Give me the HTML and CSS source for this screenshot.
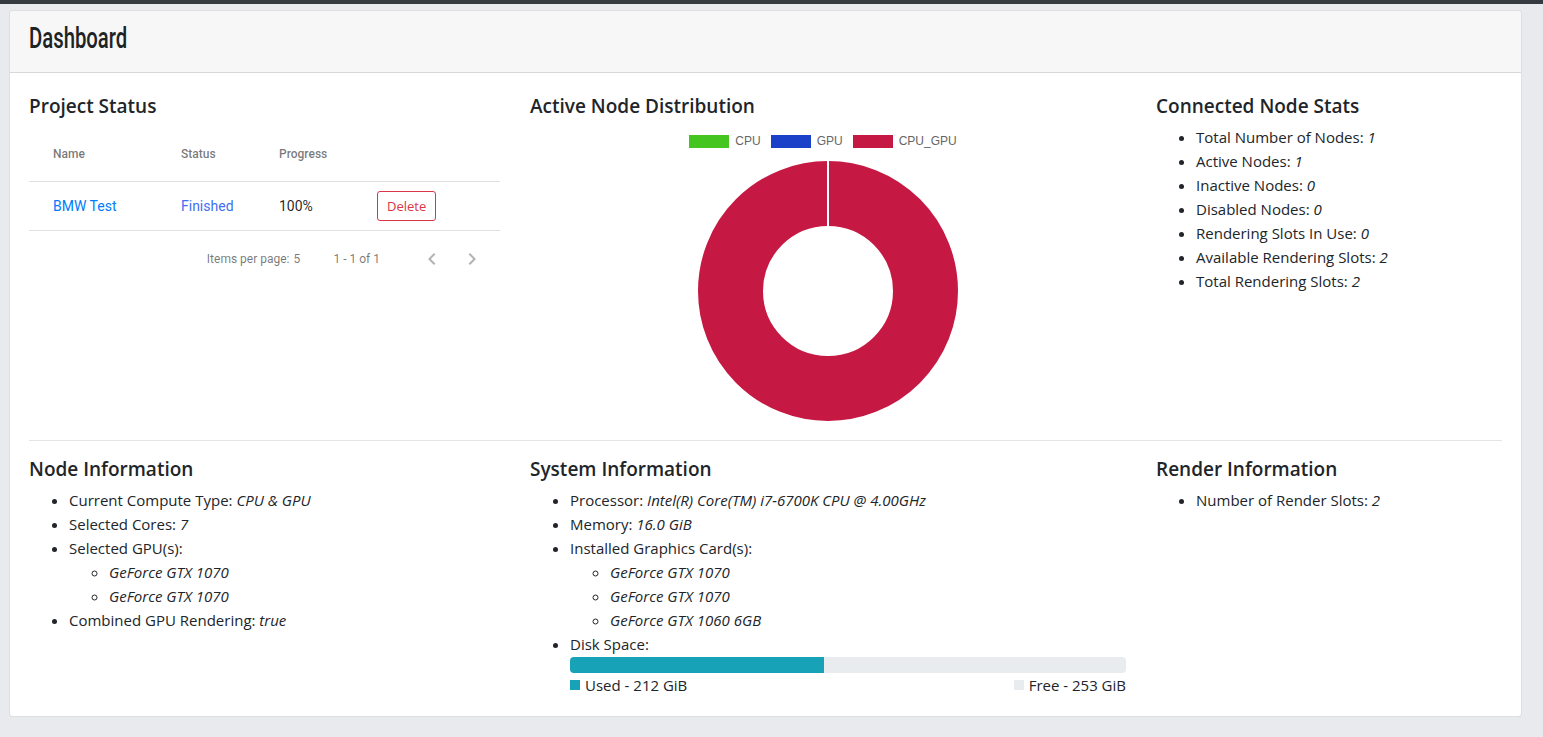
FILE: index.html
```html
<!DOCTYPE html>
<html lang="en">
<head>
<meta charset="utf-8">
<title>Dashboard</title>
<link rel="stylesheet" href="styles.css">
</head>
<body>
<div class="topbar"></div>
<main class="page">
  <section class="card">
    <header class="card-header"><h1 class="title">Dashboard</h1></header>
    <div class="card-body">
      <div class="grid">
        <div class="col">
          <h4 class="heading">Project Status</h4>
          <div class="mtable">
            <div class="mrow mhead">
              <div class="mcell">Name</div>
              <div class="mcell">Status</div>
              <div class="mcell">Progress</div>
              <div class="mcell"></div>
            </div>
            <div class="mrow mdata">
              <div class="mcell"><a class="link">BMW Test</a></div>
              <div class="mcell"><span class="finished">Finished</span></div>
              <div class="mcell">100%</div>
              <div class="mcell"><button class="btn-del">Delete</button></div>
            </div>
            <div class="paginator">
              <span class="pg-label">Items per page:</span>
              <span class="pg-select">5</span>
              <span class="pg-range">1 - 1 of 1</span>
              <span class="pg-btn"><svg viewBox="0 0 24 24" width="24" height="24"><path d="M15.41 7.41L14 6l-6 6 6 6 1.41-1.41L10.83 12z"/></svg></span>
              <span class="pg-btn"><svg viewBox="0 0 24 24" width="24" height="24"><path d="M10 6L8.59 7.41 13.17 12l-4.58 4.59L10 18l6-6z"/></svg></span>
            </div>
          </div>
        </div>
        <div class="col">
          <h4 class="heading">Active Node Distribution</h4>
          <div class="legend">
            <span class="lg-item"><span class="lg-box cpu"></span>CPU</span>
            <span class="lg-item"><span class="lg-box gpu"></span>GPU</span>
            <span class="lg-item"><span class="lg-box cpugpu"></span>CPU_GPU</span>
          </div>
          <div class="chart">
            <svg width="262" height="264" viewBox="0 0 262 264">
              <circle cx="131" cy="131" r="97.5" fill="none" stroke="#c51843" stroke-width="65"/>
              <line x1="131" y1="0" x2="131" y2="66" stroke="#ffffff" stroke-width="2"/>
            </svg>
          </div>
        </div>
        <div class="col">
          <h4 class="heading">Connected Node Stats</h4>
          <ul class="list">
            <li>Total Number of Nodes: <em>1</em></li>
            <li>Active Nodes: <em>1</em></li>
            <li>Inactive Nodes: <em>0</em></li>
            <li>Disabled Nodes: <em>0</em></li>
            <li>Rendering Slots In Use: <em>0</em></li>
            <li>Available Rendering Slots: <em>2</em></li>
            <li>Total Rendering Slots: <em>2</em></li>
          </ul>
        </div>
      </div>
      <hr class="divider">
      <div class="grid">
        <div class="col">
          <h4 class="heading">Node Information</h4>
          <ul class="list">
            <li>Current Compute Type: <em>CPU &amp; GPU</em></li>
            <li>Selected Cores: <em>7</em></li>
            <li>Selected GPU(s):
              <ul class="sublist">
                <li><em>GeForce GTX 1070</em></li>
                <li><em>GeForce GTX 1070</em></li>
              </ul>
            </li>
            <li>Combined GPU Rendering: <em>true</em></li>
          </ul>
        </div>
        <div class="col">
          <h4 class="heading">System Information</h4>
          <ul class="list">
            <li>Processor: <em>Intel(R) Core(TM) i7-6700K CPU @ 4.00GHz</em></li>
            <li>Memory: <em>16.0 GiB</em></li>
            <li>Installed Graphics Card(s):
              <ul class="sublist">
                <li><em>GeForce GTX 1070</em></li>
                <li><em>GeForce GTX 1070</em></li>
                <li><em>GeForce GTX 1060 6GB</em></li>
              </ul>
            </li>
            <li>Disk Space:
              <div class="progress"><div class="progress-bar" style="width: 45.6%"></div></div>
              <div class="disk-legend">
                <span class="dl-item"><span class="dl-box used"></span>Used - 212 GiB</span>
                <span class="dl-item"><span class="dl-box free"></span>Free - 253 GiB</span>
              </div>
            </li>
          </ul>
        </div>
        <div class="col">
          <h4 class="heading">Render Information</h4>
          <ul class="list">
            <li>Number of Render Slots: <em>2</em></li>
          </ul>
        </div>
      </div>
    </div>
  </section>
</main>
</body>
</html>
```
FILE: styles.css
```css
* { box-sizing: border-box; }
html, body { margin: 0; padding: 0; }
body {
  background: #e9eaee;
  font-family: "Open Sans", "Noto Sans", sans-serif;
  font-size: 15px;
  color: #212529;
  height: 737px;
  overflow: hidden;
}
.topbar { height: 4px; background: #343a40; }
.page { padding: 6px 21px 0 9px; }
.card {
  background: #fff;
  border: 1px solid rgba(0,0,0,.125);
  border-radius: 4px;
}
.card-header {
  background: #f7f7f7;
  border-bottom: 1px solid rgba(0,0,0,.125);
  height: 62px;
  padding: 0 19px 8px;
  display: flex;
  align-items: center;
  border-radius: 4px 4px 0 0;
}
.title {
  margin: 0;
  font-family: Roboto, "Liberation Sans", sans-serif;
  font-size: 29px;
  font-weight: 500;
  color: #1e2326;
  line-height: 32px;
  display: inline-block;
  transform: scaleX(0.7);
  transform-origin: left center;
}
.card-body { padding: 21px 19px 19px; }
.grid {
  display: grid;
  grid-template-columns: 471fr 596fr 346fr;
  column-gap: 30px;
}
.heading {
  margin: 0 0 7px;
  font-size: 19px;
  font-weight: 600;
  line-height: 24px;
  color: #212529;
}
.list { margin: 0; padding-left: 40px; line-height: 24px; }
.list em { font-style: italic; }
.sublist { margin: 0; padding-left: 40px; list-style-type: circle; }
.divider { border: 0; border-top: 1px solid rgba(0,0,0,.1); margin: 16px 0 16px; }

/* table */
.mtable { font-family: Roboto, sans-serif; font-size: 14px; color: rgba(0,0,0,.87); padding-top: 1px; }
.mrow {
  display: grid;
  grid-template-columns: 152px 98px 98px 1fr;
  align-items: center;
  border-bottom: 1px solid rgba(0,0,0,.12);
}
.mrow .mcell:first-child { padding-left: 24px; }
.mhead { height: 56px; font-size: 12px; font-weight: 500; color: rgba(0,0,0,.54); }
.mdata { height: 49px; }
.link { color: #007bff; }
.finished { color: #3f6ff2; }
.btn-del {
  font-family: "Open Sans", sans-serif;
  font-size: 13px;
  color: #dc3545;
  background: #fff;
  border: 1px solid #dc3545;
  border-radius: 3px;
  height: 30px;
  padding: 0 9px;
}
.paginator {
  display: flex;
  align-items: center;
  justify-content: flex-end;
  height: 56px;
  padding-right: 8px;
  font-size: 12px;
  color: rgba(0,0,0,.54);
}
.pg-label { margin-right: 4px; }
.pg-select { width: 16px; }
.pg-range { margin: 0 32px 0 24px; }
.pg-btn { width: 40px; height: 40px; display: flex; align-items: center; justify-content: center; }
.pg-btn svg { fill: rgba(0,0,0,.3); }

/* chart */
.legend {
  display: flex;
  justify-content: center;
  gap: 10px;
  padding-top: 9px;
  padding-right: 10px;
  height: 23px;
  font-family: "Liberation Sans", Arial, sans-serif;
  font-size: 12px;
  color: #666;
}
.lg-item { display: flex; align-items: center; gap: 6px; }
.lg-box { width: 40px; height: 13px; display: inline-block; }
.cpu { background: #44c51f; }
.gpu { background: #1a41c8; }
.cpugpu { background: #c51843; }
.chart { display: flex; justify-content: center; margin-top: 12px; }
.chart svg { display: block; }

/* disk */
.progress {
  height: 16px;
  margin-top: 1px;
  background: #e9ecef;
  border-radius: 4px;
  overflow: hidden;
  display: flex;
}
.progress-bar { background: #17a2b8; height: 100%; }
.disk-legend { display: flex; justify-content: space-between; }
.dl-item { display: flex; align-items: center; gap: 5px; }
.dl-box { width: 10px; height: 10px; display: inline-block; }
.used { background: #17a2b8; }
.free { background: #e9ecef; }
```
